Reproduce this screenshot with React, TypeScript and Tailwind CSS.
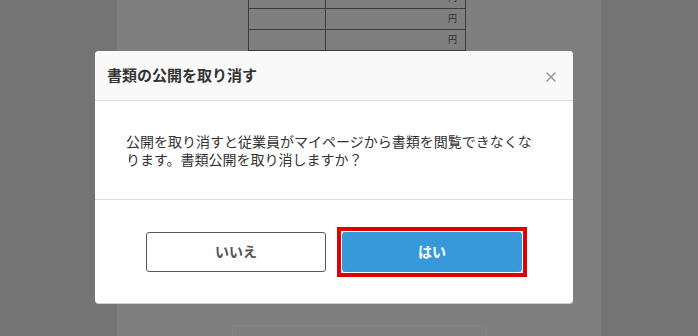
import { X } from 'lucide-react';

const rows = ['円', '円', '円', '円'];

const App = () => {
    return (
        <div className="relative w-[698px] h-[336px] overflow-hidden font-['Noto_Sans_CJK_JP','Noto_Sans',sans-serif]">
            {/* document behind the overlay */}
            <div className="flex h-full">
                <div className="w-[117px] bg-[#747474]" />
                <div className="relative w-[484px] bg-[#7f7f7f]">
                    <div className="ml-[131px] -mt-[12px] w-[218px] border-x border-[#3c3c3c]">
                        {rows.map((r, i) => (
                            <div key={i} className="flex h-[21px] border-b border-[#3c3c3c]">
                                <div className="w-[77px] border-r border-[#3c3c3c]" />
                                <div className="flex flex-1 items-center justify-end pr-[8px] text-[9px] text-[#2e2e2e]">{r}</div>
                            </div>
                        ))}
                    </div>
                    <div className="absolute left-[115px] top-[325px] h-[40px] w-[254px] rounded border border-[#858585]" />
                </div>
                <div className="flex-1 bg-[#747474]" />
            </div>

            {/* dialog */}
            <div className="absolute left-[95px] top-[51px] w-[478px] overflow-hidden rounded-[4px] border-b border-[#cfcfcf] bg-white">
                <div className="flex h-[50px] items-center justify-between border-b border-[#dddddd] bg-[#f9f9f9] pl-[12px] pr-[14px]">
                    <h2 className="text-[15px] font-bold text-[#333]">書類の公開を取り消す</h2>
                    <X className="mt-[3px] h-[16px] w-[16px] text-[#9a9a9a]" strokeWidth={2.4} />
                </div>
                <div className="flex h-[99px] items-center border-b border-[#dddddd] px-[31px]">
                    <p className="text-[14px] leading-[18px] text-[#333]">
                        公開を取り消すと従業員がマイページから書類を閲覧できなくなります。書類公開を取り消しますか？
                    </p>
                </div>
                <div className="flex h-[103px] items-center justify-center gap-[16px]">
                    <button className="h-[40px] w-[180px] rounded-[3px] border border-[#555] bg-white text-[14px] font-bold text-[#555]">
                        いいえ
                    </button>
                    <div className="-m-[5px] border-4 border-[#e00000] bg-white p-[1px]">
                        <button className="block h-[40px] w-[180px] rounded-[3px] bg-[#3899da] text-[14px] font-bold text-white">
                            はい
                        </button>
                    </div>
                </div>
            </div>
        </div>
    );
};

export default App;
